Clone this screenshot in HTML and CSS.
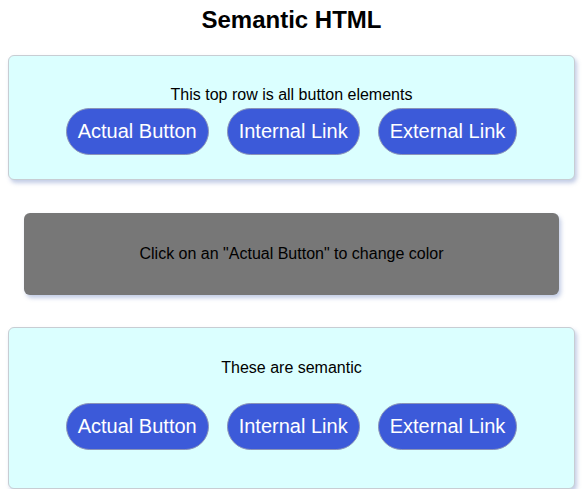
FILE: index.html
```html
<!DOCTYPE html>
<html lang="en">
<head>
<meta charset="utf-8">
<title>Semantic HTML</title>
<link rel="stylesheet" href="styles.css">
</head>
<body>
<main class="page">
  <h1 class="title">Semantic HTML</h1>
  <section class="card card-top">
    <p class="card-text card-text-top">This top row is all button elements</p>
    <div class="btn-row">
      <button class="btn" type="button">Actual Button</button>
      <button class="btn" type="button">Internal Link</button>
      <button class="btn" type="button">External Link</button>
    </div>
  </section>
  <div class="status">Click on an "Actual Button" to change color</div>
  <section class="card card-bottom">
    <p class="card-text card-text-bottom">These are semantic</p>
    <div class="btn-row">
      <button class="btn" type="button">Actual Button</button>
      <a class="btn" href="#top">Internal Link</a>
      <a class="btn" href="#external">External Link</a>
    </div>
  </section>
</main>
</body>
</html>
```

FILE: styles.css
```css
html, body {
  margin: 0;
  padding: 0;
  background: #ffffff;
}

body {
  font-family: "Liberation Sans", Arial, Helvetica, sans-serif;
  color: #000;
}

.page {
  padding: 0 8px;
}

.title {
  margin: 6px 0 0;
  font-size: 24px;
  font-weight: bold;
  line-height: 28px;
  text-align: center;
}

.card {
  background: #dbffff;
  border: 1px solid #c8cdd3;
  border-radius: 6px;
  box-shadow: 2px 3px 4px rgba(80, 110, 180, 0.35);
  text-align: center;
}

.card-top {
  margin-top: 21px;
  padding: 30px 0 24px;
}

.card-bottom {
  margin-top: 32px;
  padding: 31px 0 38px;
}

.card-text {
  margin: 0;
  font-size: 16px;
  line-height: 18px;
}

.card-text-top {
  margin-bottom: 4px;
}

.card-text-bottom {
  margin-bottom: 26px;
}

.btn-row {
  display: flex;
  justify-content: center;
  gap: 18px;
}

.btn {
  display: inline-block;
  padding: 11px 11px;
  font-family: "Liberation Sans", Arial, Helvetica, sans-serif;
  font-size: 20px;
  line-height: 23px;
  color: #ffffff;
  background: #3c5ad9;
  border: 1px solid #8a93b8;
  border-radius: 24px;
  text-decoration: none;
  cursor: pointer;
}

.status {
  margin: 33px 16px 0;
  height: 82px;
  display: flex;
  align-items: center;
  justify-content: center;
  background: #777777;
  border-radius: 6px;
  box-shadow: 2px 3px 4px rgba(80, 110, 180, 0.35);
  font-size: 16px;
  color: #000;
}
```
